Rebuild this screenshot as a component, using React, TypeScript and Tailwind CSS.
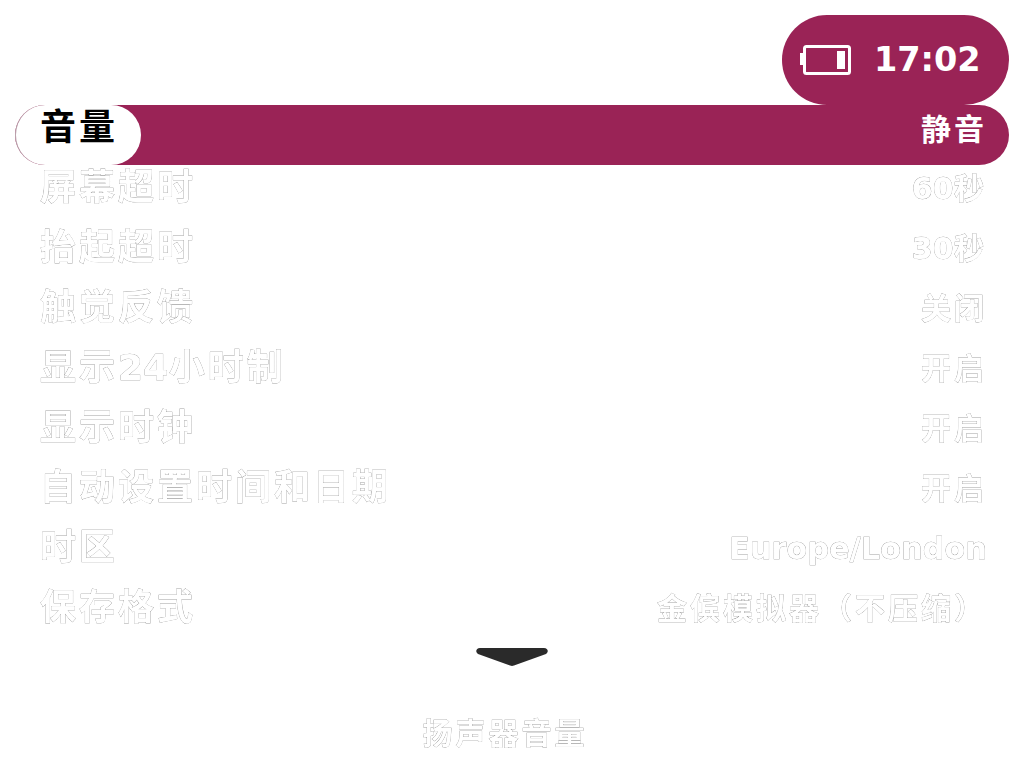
const rows = [
  ["屏幕超时", "60秒"],
  ["抬起超时", "30秒"],
  ["触觉反馈", "关闭"],
  ["显示24小时制", "开启"],
  ["显示时钟", "开启"],
  ["自动设置时间和日期", "开启"],
  ["时区", "Europe/London"],
  ["保存格式", "金傧模拟器（不压缩）"],
];

const font = "font-['DejaVu_Sans','Noto_Sans_CJK_SC',sans-serif] font-bold";
const ghost = "text-white will-change-transform [-webkit-text-stroke:0.45px_#777777] [paint-order:stroke_fill]";

// latin runs sit tighter than the cjk ones
function Mixed({ text }: { text: string }) {
  const parts = text.match(/[A-Za-z0-9/]+|[^A-Za-z0-9/]+/g) ?? [];
  return (
    <>
      {parts.map((part, i) => (
        <span key={i} className={/^[A-Za-z0-9/]/.test(part) ? "tracking-[0.25px]" : "tracking-[3px]"}>
          {part}
        </span>
      ))}
    </>
  );
}

export default function App() {
  return (
    <div className={`w-[1024px] h-[768px] bg-white overflow-hidden flex flex-col ${font}`}>
      <div className="flex justify-end pt-[15px] pr-[15px]">
        <div className="w-[227px] h-[90px] rounded-[45px] bg-[#9a2356] flex items-center pl-[18px] text-white">
          <svg width="51" height="30" viewBox="0 0 51 30" className="shrink-0">
            <rect x="0" y="8" width="4" height="12" fill="#fff" />
            <rect x="4.5" y="1.5" width="45" height="27" rx="2" fill="none" stroke="#fff" strokeWidth="3" />
            <rect x="37" y="6" width="8" height="18" fill="#fff" />
          </svg>
          <span className="ml-[23px] text-[33.5px] leading-none">17:02</span>
        </div>
      </div>
      <div className="mx-[15px] h-[60px] rounded-[30px] bg-[#9a2356] flex items-start justify-between">
        <div className="w-[126px] h-[60px] rounded-[30px] bg-white pl-[24px] pt-[2px] text-[36px] leading-[42px] tracking-[3px] text-black border-l border-[#b9a4ad]">音量</div>
        <div className="pr-[22px] pt-[4px] text-[30px] leading-[42px] tracking-[3px] text-white">静音</div>
      </div>
      {rows.map(([label, value]) => (
        <div key={label} className={`mx-[15px] h-[60px] pl-[25px] pr-[22px] flex items-start justify-between ${ghost}`}>
          <span className="text-[36px] leading-[46px]"><Mixed text={label} /></span>
          <span className="text-[30px] leading-[48px]"><Mixed text={value} /></span>
        </div>
      ))}
      <div className="flex justify-center mt-[3px]">
        <svg width="72" height="18" viewBox="0 0 72 18">
          <path d="M4 0H68C72 0 73 4 70 6L38 17.5C36.5 18 35.5 18 34 17.5L2 6C-1 4 0 0 4 0Z" fill="#2a2a2a" />
        </svg>
      </div>
      <div className={`text-center mt-[46px] pr-[14px] text-[30px] leading-[44px] tracking-[3px] ${ghost}`}>扬声器音量</div>
    </div>
  );
}
